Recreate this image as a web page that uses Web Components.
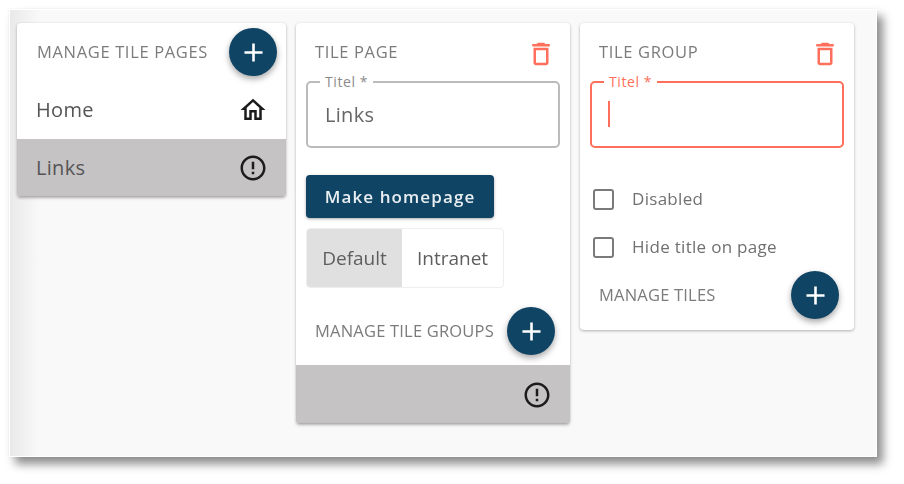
<!DOCTYPE html>
<html>
<head>
<meta charset="utf-8">
<title>Tile pages</title>
<style>
html, body { margin: 0; height: 100%; background: #fff; }
body { font-family: "Open Sans", sans-serif; color: #595959; }
</style>
</head>
<body>
<tile-frame>
  <tile-card style="width:269px">
    <tile-heading fab>MANAGE TILE PAGES</tile-heading>
    <tile-row icon="home">Home</tile-row>
    <tile-row icon="alert" selected>Links</tile-row>
  </tile-card>
  <tile-card style="width:274px">
    <tile-heading trash>TILE PAGE</tile-heading>
    <tile-field label="Titel *" value="Links"></tile-field>
    <tile-button>Make homepage</tile-button>
    <tile-toggle></tile-toggle>
    <tile-heading fab low>MANAGE TILE GROUPS</tile-heading>
    <tile-row icon="alert" selected short></tile-row>
  </tile-card>
  <tile-card style="width:274px">
    <tile-heading trash>TILE GROUP</tile-heading>
    <tile-field label="Titel *" focused></tile-field>
    <tile-check style="margin-top:27px">Disabled</tile-check>
    <tile-check>Hide title on page</tile-check>
    <tile-heading fab last>MANAGE TILES</tile-heading>
  </tile-card>
</tile-frame>

<script>
const ICONS = {
  add: 'M19 13h-6v6h-2v-6H5v-2h6V5h2v6h6v2z',
  trash: 'M6 19c0 1.1.9 2 2 2h8c1.1 0 2-.9 2-2V7H6v12zM8 9h8v10H8V9zm7.5-5l-1-1h-5l-1 1H5v2h14V4h-3.5z',
  home: 'M12 5.69l5 4.5V18h-2v-6H9v6H7v-7.81l5-4.5M12 3L2 12h3v8h6v-6h2v6h6v-8h3L12 3z',
  alert: 'M11 15h2v2h-2zm0-8h2v6h-2zm.99-5C6.47 2 2 6.48 2 12s4.47 10 9.99 10C17.52 22 22 17.52 22 12S17.52 2 11.99 2zM12 20c-4.42 0-8-3.58-8-8s3.58-8 8-8 8 3.58 8 8-3.58 8-8 8z'
};

function icon(name, size, color) {
  return `<svg width="${size}" height="${size}" viewBox="0 0 24 24" fill="${color}"><path d="${ICONS[name]}"/></svg>`;
}

class TileElement extends HTMLElement {
  constructor() {
    super();
    this.attachShadow({mode: 'open'});
  }
  connectedCallback() {
    this.shadowRoot.innerHTML = this.render();
  }
}

class TileFrame extends TileElement {
  render() {
    return `<style>
      :host {
        display: block;
        width: 868px;
        height: 448px;
        margin: 9px 0 0 9px;
        box-sizing: border-box;
        border: 1px solid #fff;
        box-shadow: 6px 7px 9px rgba(0, 0, 0, .45), 0 0 2px rgba(0, 0, 0, .08);
        background: linear-gradient(90deg, #e9e9e9, #f9f9f9 30px);
        filter: blur(.5px);
      }
      .inner {
        display: flex;
        align-items: flex-start;
        gap: 10px;
        padding: 13px 0 0 7px;
      }
    </style><div class="inner"><slot></slot></div>`;
  }
}

class TileCard extends TileElement {
  render() {
    return `<style>
      :host {
        display: flex;
        flex-direction: column;
        flex: none;
        background: #fff;
        border-radius: 4px;
        overflow: hidden;
        box-shadow: 0 1px 3px rgba(0, 0, 0, .3);
      }
    </style><slot></slot>`;
  }
}

class TileHeading extends TileElement {
  render() {
    const action = this.hasAttribute('fab')
      ? `<button class="fab">${icon('add', 31, '#fff')}</button>`
      : this.hasAttribute('trash') ? `<span class="trash">${icon('trash', 30, '#ff6f5b')}</span>` : '';
    return `<style>
      :host {
        display: flex;
        align-items: center;
        justify-content: space-between;
        height: 58px;
        padding: 0 9px 0 20px;
        font-size: 16.5px;
        letter-spacing: .65px;
        color: #7b7b7b;
        box-sizing: border-box;
      }
      :host([trash]) { padding-left: 19px; }
      :host([low]) { height: 48px; margin: 19px 0 10px; padding: 0 15px 0 19px; letter-spacing: .2px; }
      :host([last]) { height: 48px; margin-bottom: 11px; padding: 0 15px 0 19px; letter-spacing: .2px; }
      .label { margin-top: -2px; }
      .fab {
        width: 48px;
        height: 48px;
        padding: 0;
        border: 0;
        border-radius: 50%;
        background: #0f4464;
        display: flex;
        align-items: center;
        justify-content: center;
        box-shadow: 0 3px 6px rgba(0, 0, 0, .35);
      }
      svg { display: block; }
      .trash { margin: 3px 5px 0 0; }
    </style><span class="label"><slot></slot></span>${action}`;
  }
}

class TileRow extends TileElement {
  render() {
    return `<style>
      :host {
        display: flex;
        align-items: center;
        justify-content: space-between;
        height: 58px;
        padding: 0 18px 0 19px;
        font-size: 20px;
        letter-spacing: .3px;
        color: #555;
        box-sizing: border-box;
      }
      :host([selected]) { background: #c5c3c4; box-shadow: inset 0 -1px 1px rgba(0, 0, 0, .1); }
      :host([short]) { height: 59px; }
      span { margin-top: -2px; }
      svg { display: block; }
    </style><span><slot></slot></span>${icon(this.getAttribute('icon'), 30, '#1c1c1c')}`;
  }
}

class TileField extends TileElement {
  render() {
    const value = this.getAttribute('value') || '';
    return `<style>
      :host {
        display: block;
        position: relative;
        height: 67px;
        margin: 0 10px;
        padding-left: 17px;
        box-sizing: border-box;
        border: 2px solid #bbb;
        border-radius: 5px;
        font-size: 20px;
        letter-spacing: .3px;
        color: #666;
      }
      :host([focused]) { border-color: #ff6f5b; }
      label {
        position: absolute;
        top: -11px;
        left: 12px;
        padding: 0 5px;
        background: #fff;
        font-size: 14px;
        letter-spacing: .6px;
        color: #8a8a8a;
      }
      :host([focused]) label { color: #ff6f5b; }
      .value { display: flex; align-items: center; height: 100%; }
      .caret { width: 2px; height: 26px; margin: -2px 0 0 -1px; background: #ff6f5b; }
    </style><label>${this.getAttribute('label')}</label>
    <div class="value">${this.hasAttribute('focused') ? '<span class="caret"></span>' : value}</div>`;
  }
}

class TileButton extends TileElement {
  render() {
    return `<style>
      :host {
        display: flex;
        align-items: center;
        justify-content: center;
        width: 188px;
        height: 43px;
        margin: 27px 0 0 10px;
        border-radius: 4px;
        background: #0f4464;
        color: #e8eef2;
        font-size: 17px;
        font-weight: 600;
        letter-spacing: 1.1px;
        box-shadow: 0 1px 3px rgba(0, 0, 0, .35);
      }
    </style><slot></slot>`;
  }
}

class TileToggle extends TileElement {
  render() {
    return `<style>
      :host {
        display: flex;
        width: 198px;
        height: 60px;
        margin: 10px 0 0 10px;
        box-sizing: border-box;
        border: 1px solid #eee;
        border-radius: 4px;
        overflow: hidden;
        font-size: 19px;
        color: #5e5e5e;
      }
      span { display: flex; align-items: center; justify-content: center; }
      .on { width: 95px; background: #e0e0e0; }
      .off { flex: 1; }
    </style><span class="on">Default</span><span class="off">Intranet</span>`;
  }
}

class TileCheck extends TileElement {
  render() {
    return `<style>
      :host {
        display: flex;
        align-items: center;
        height: 48px;
        padding-left: 13px;
        font-size: 17px;
        letter-spacing: .3px;
        color: #707070;
      }
      .box {
        width: 21px;
        height: 21px;
        margin-right: 18px;
        box-sizing: border-box;
        border: 2px solid #7a7a7a;
        border-radius: 3px;
      }
      .label { margin-top: -2px; }
    </style><span class="box"></span><span class="label"><slot></slot></span>`;
  }
}

customElements.define('tile-frame', TileFrame);
customElements.define('tile-card', TileCard);
customElements.define('tile-heading', TileHeading);
customElements.define('tile-row', TileRow);
customElements.define('tile-field', TileField);
customElements.define('tile-button', TileButton);
customElements.define('tile-toggle', TileToggle);
customElements.define('tile-check', TileCheck);
</script>
</body>
</html>
